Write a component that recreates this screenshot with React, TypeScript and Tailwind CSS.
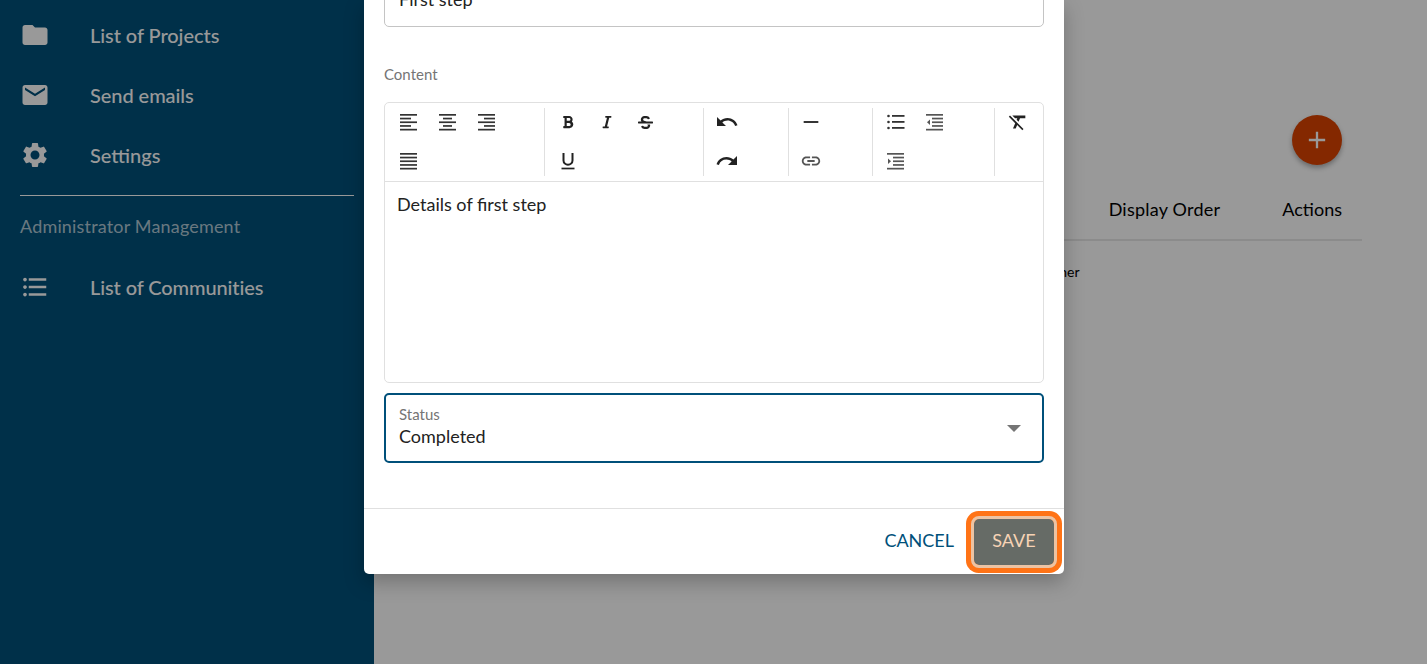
import type { ReactNode } from "react";
import {
  MdFolder,
  MdEmail,
  MdSettings,
  MdFormatListBulleted,
  MdAdd,
  MdUndo,
  MdRedo,
  MdHorizontalRule,
  MdLink,
  MdFormatClear,
} from "react-icons/md";
import { FaBold, FaItalic, FaStrikethrough } from "react-icons/fa";

function NavItem({ icon, label, track }: { icon: ReactNode; label: string; track: string }) {
  return (
    <div className="flex h-[60px] items-center pl-5 text-[20px] font-medium text-white">
      <span className="flex w-[70px] text-[30px]">{icon}</span>
      <span className={track}>{label}</span>
    </div>
  );
}

function ToolGroup({ width, children }: { width: string; children: ReactNode }) {
  return (
    <div className={`mt-[5px] grid h-[68px] auto-rows-[28px] content-start gap-y-[11px] border-r border-[#e0e0e0] grid-cols-[repeat(3,39px)] ${width}`}>
      {children}
    </div>
  );
}

function Tool({ children }: { children: ReactNode }) {
  return <span className="flex items-center justify-center text-[#222]">{children}</span>;
}

// five stacked 2px lines, used by the align buttons: [x, width] per line
function LinesIcon({ lines }: { lines: [number, number][] }) {
  return (
    <svg width="17" height="18" viewBox="0 0 17 18" fill="#333">
      {lines.map(([x, w], i) => (
        <rect key={i} x={x} y={1 + i * 3.7} width={w} height="1.7" />
      ))}
    </svg>
  );
}

function IndentIcon({ flip }: { flip?: boolean }) {
  return (
    <svg width="17" height="18" viewBox="0 0 17 18" fill="#555">
      <rect x="0" y="1" width="17" height="1.7" />
      <rect x="6" y="4.7" width="11" height="1.7" />
      <rect x="6" y="8.4" width="11" height="1.7" />
      <rect x="6" y="12.1" width="11" height="1.7" />
      <rect x="0" y="15.8" width="17" height="1.7" />
      <path d={flip ? "M1 6.5 L4 9.2 L1 12 Z" : "M4 6.5 L1 9.2 L4 12 Z"} />
    </svg>
  );
}

function BulletsIcon() {
  return (
    <svg width="18" height="18" viewBox="0 0 18 18" fill="#333">
      <circle cx="1.5" cy="3" r="1.3" />
      <circle cx="1.5" cy="9" r="1.3" />
      <circle cx="1.5" cy="15" r="1.3" />
      <rect x="5" y="2" width="12.5" height="1.8" />
      <rect x="5" y="8" width="12.5" height="1.8" />
      <rect x="5" y="14" width="12.5" height="1.8" />
    </svg>
  );
}

function UnderlineIcon() {
  return (
    <svg width="14" height="18" viewBox="0 0 14 18" fill="none" stroke="#222">
      <path d="M2.5 1 V8.5 C2.5 14 11.5 14 11.5 8.5 V1" strokeWidth="2" />
      <path d="M0.5 16.5 H13.5" strokeWidth="1.7" />
    </svg>
  );
}

const full: [number, number] = [0, 17];

export default function App() {
  return (
    <div className="relative h-[664px] w-[1427px] overflow-hidden bg-white font-['Lato',sans-serif]">
      <div className="flex h-full">
        <aside className="h-full w-[374px] bg-[#00507a] pt-[5px]">
          <NavItem icon={<MdFolder />} label="List of Projects" track="tracking-[-0.06px]" />
          <NavItem icon={<MdEmail />} label="Send emails" track="tracking-[-0.06px]" />
          <NavItem icon={<MdSettings />} label="Settings" track="tracking-normal" />
          <div className="mx-5 mt-[10px] border-t border-white" />
          <div className="mt-[19px] pl-5 text-[18px] leading-[22px] tracking-[0.17px] text-white/70">Administrator Management</div>
          <div className="mt-[20px]">
            <NavItem icon={<MdFormatListBulleted />} label="List of Communities" track="tracking-[-0.1px]" />
          </div>
        </aside>
        <main className="flex-1 pr-[65px] pt-[115px]">
          <div className="flex justify-end pr-5">
            <button className="flex h-[50px] w-[50px] items-center justify-center rounded-full bg-[#dc4300] text-[28px] text-white shadow-[0_3px_5px_rgba(0,0,0,0.3)]">
              <MdAdd />
            </button>
          </div>
          <div className="mt-[24px] flex h-[52px] items-center justify-end border-b-2 border-[#e8e8e8] pb-[10px] pr-5 text-[18px] text-black">
            <span className="tracking-[0.23px]">Display Order</span>
            <span className="ml-[62px]">Actions</span>
          </div>
          <div className="mt-[20px] pl-[669px] text-[14px] text-black">Other</div>
        </main>
      </div>

      {/* backdrop + dialog */}
      <div className="absolute inset-0 bg-black/40" />
      <div className="absolute left-[364px] top-0 flex h-[574px] w-[700px] flex-col overflow-hidden rounded-b-[5px] bg-white text-[#222] shadow-[0_8px_20px_rgba(0,0,0,0.25)]">
        <div className="flex-1 px-5">
          <div className="-mt-[30px] flex h-[57px] items-center rounded-[5px] border border-[#c4c4c4] px-[14px] pt-[2px] text-[18px]">First step</div>
          <div className="mt-[37px] text-[15px] leading-[20px] text-[#757575]">Content</div>
          <div className="mt-[18px] h-[281px] rounded-[5px] border border-[#e0e0e0]">
            <div className="flex h-[79px] border-b border-[#e0e0e0]">
              <ToolGroup width="w-[160px] pl-[4px]">
                <Tool><LinesIcon lines={[full, [0, 11], full, [0, 11], full]} /></Tool>
                <Tool><LinesIcon lines={[full, [4, 9], full, [4, 9], full]} /></Tool>
                <Tool><LinesIcon lines={[full, [6, 11], full, [6, 11], full]} /></Tool>
                <Tool><LinesIcon lines={[full, full, full, full, full]} /></Tool>
              </ToolGroup>
              <ToolGroup width="w-[159px] pl-[3px]">
                <Tool><FaBold size={14} /></Tool>
                <Tool><FaItalic size={14} /></Tool>
                <Tool><FaStrikethrough size={15} /></Tool>
                <Tool><UnderlineIcon /></Tool>
              </ToolGroup>
              <ToolGroup width="w-[85px] pl-[3px]">
                <Tool><MdUndo size={24} /></Tool>
                <span />
                <span />
                <Tool><MdRedo size={24} /></Tool>
              </ToolGroup>
              <ToolGroup width="w-[84px] pl-[2px]">
                <Tool><MdHorizontalRule size={22} /></Tool>
                <span />
                <span />
                <Tool><span className="flex text-[#555]"><MdLink size={22} /></span></Tool>
              </ToolGroup>
              <ToolGroup width="w-[122px] pl-[3px]">
                <Tool><BulletsIcon /></Tool>
                <Tool><IndentIcon /></Tool>
                <span />
                <Tool><IndentIcon flip /></Tool>
              </ToolGroup>
              <div className="mt-[5px] pl-[3px]">
                <span className="flex h-[28px] w-[39px] items-center justify-center text-[#222]"><MdFormatClear size={22} /></span>
              </div>
            </div>
            <div className="px-3 pt-[11px] text-[18px] leading-[22px]">Details of first step</div>
          </div>
          <div className="mt-[10px] flex h-[70px] items-center justify-between rounded-[5px] border-2 border-[#00507a] pl-[13px] pr-[21px]">
            <div className="-mt-[3px]">
              <div className="text-[15px] leading-[17px] text-[#757575]">Status</div>
              <div className="mt-[1px] text-[18px] leading-[24px]">Completed</div>
            </div>
            <span className="h-0 w-0 border-x-[7px] border-t-[7px] border-x-transparent border-t-[#757575]" />
          </div>
        </div>
        <div className="flex h-[66px] items-center justify-end gap-[20px] border-t border-[#e0e0e0] pr-[10px]">
          <button className="pb-[2px] text-[18px] text-[#00507a]">CANCEL</button>
          <button className="flex h-[46px] w-[80px] items-center justify-center rounded-[5px] bg-[#666b66] pb-[2px] text-[18px] text-[#f7d3b5] outline-[3px] outline-[#ecc3a3] ring-[8px] ring-[#ff7316]">SAVE</button>
        </div>
      </div>
    </div>
  );
}
